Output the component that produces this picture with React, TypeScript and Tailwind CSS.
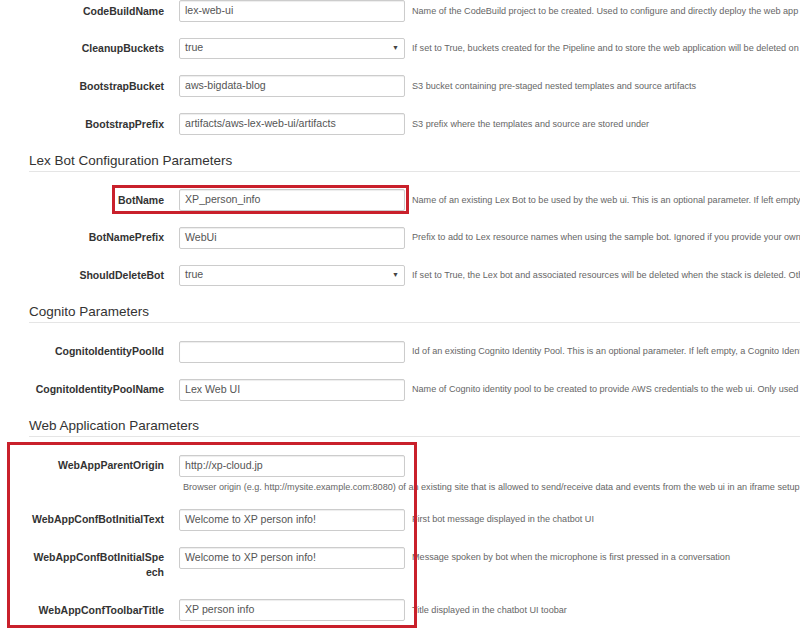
import React from 'react';

type Param = {
    label: string;
    value: string;
    help: string;
    select?: boolean;
    helpBelow?: boolean;
};

const general: Param[] = [
    { label: 'CodeBuildName', value: 'lex-web-ui', help: 'Name of the CodeBuild project to be created. Used to configure and directly deploy the web app to S3' },
    { label: 'CleanupBuckets', value: 'true', select: true, help: 'If set to True, buckets created for the Pipeline and to store the web application will be deleted on CloudFormation delete' },
    { label: 'BootstrapBucket', value: 'aws-bigdata-blog', help: 'S3 bucket containing pre-staged nested templates and source artifacts' },
    { label: 'BootstrapPrefix', value: 'artifacts/aws-lex-web-ui/artifacts', help: 'S3 prefix where the templates and source are stored under' },
];

const lexBot: Param[] = [
    { label: 'BotName', value: 'XP_person_info', help: 'Name of an existing Lex Bot to be used by the web ui. This is an optional parameter. If left empty, a sample bot will be created' },
    { label: 'BotNamePrefix', value: 'WebUi', help: 'Prefix to add to Lex resource names when using the sample bot. Ignored if you provide your own bot' },
    { label: 'ShouldDeleteBot', value: 'true', select: true, help: 'If set to True, the Lex bot and associated resources will be deleted when the stack is deleted. Otherwise, the bot will be preserved' },
];

const cognito: Param[] = [
    { label: 'CognitoIdentityPoolId', value: '', help: 'Id of an existing Cognito Identity Pool. This is an optional parameter. If left empty, a Cognito Identity Pool will be automatically created' },
    { label: 'CognitoIdentityPoolName', value: 'Lex Web UI', help: 'Name of Cognito identity pool to be created to provide AWS credentials to the web ui. Only used if CognitoIdentityPoolId is not specified' },
];

const webApp: Param[] = [
    { label: 'WebAppParentOrigin', value: 'http://xp-cloud.jp', helpBelow: true, help: 'Browser origin (e.g. http://mysite.example.com:8080) of an existing site that is allowed to send/receive data and events from the web ui in an iframe setup.' },
    { label: 'WebAppConfBotInitialText', value: 'Welcome to XP person info!', help: 'First bot message displayed in the chatbot UI' },
    { label: 'WebAppConfBotInitialSpeech', value: 'Welcome to XP person info!', help: 'Message spoken by bot when the microphone is first pressed in a conversation' },
    { label: 'WebAppConfToolbarTitle', value: 'XP person info', help: 'Title displayed in the chatbot UI toobar' },
];

function Row({ p, highlight }: { p: Param; highlight?: boolean }) {
    return (
        <div className="relative flex items-start mb-[15.2px]">
            {/* Label */}
            <div className="ml-[2px] w-[133px] shrink-0 text-right font-bold text-[10.5px] leading-[15px] text-[#333] pt-[3.5px] pb-[4px] break-all">
                {p.label}
            </div>

            <div className="ml-[15px] flex flex-col">
                <div className="flex items-start">
                    {p.select ? (
                        <div className="w-[226px] h-[21px] shrink-0 flex items-center justify-between border border-[#ccc] rounded-[2px] bg-white px-[5px] text-[10.6px] text-[#555]">
                            <span>{p.value}</span>
                            <span className="text-[7px] text-[#444]">▼</span>
                        </div>
                    ) : (
                        <div className="w-[226px] h-[22px] shrink-0 flex items-center border border-[#ccc] rounded-[2px] bg-white px-[5px] text-[10.6px] text-[#555] shadow-[inset_0_1px_1px_rgba(0,0,0,0.075)]">
                            {p.value}
                        </div>
                    )}
                    {!p.helpBelow && (
                        <div className="ml-[7px] pt-[4.5px] whitespace-nowrap text-[9.1px] leading-[13px] text-[#666]">
                            {p.help}
                        </div>
                    )}
                </div>
                {p.helpBelow && (
                    <div className="mt-[4px] ml-[4px] whitespace-nowrap text-[9.1px] leading-[13px] text-[#666]">
                        {p.help}
                    </div>
                )}
            </div>

            {highlight && (
                <div className="absolute left-[83px] -top-[4px] w-[297px] h-[29px] border-[3px] border-[#c9202b]" />
            )}
        </div>
    );
}

function Heading({ children }: { children: React.ReactNode }) {
    // top gap comes from the previous row's bottom margin (collapses)
    return (
        <div className="ml-[29px] mb-[17.5px] h-[21px] border-b border-[#e5e5e5] text-[13.5px] leading-[20px] text-[#333]">
            {children}
        </div>
    );
}

export default function App() {
    return (
        <div className="w-[800px] h-[637px] overflow-hidden bg-white" style={{ fontFamily: '"Liberation Sans", Arial, sans-serif' }}>
            <div className="ml-[29px]">
                {general.map((p) => <Row key={p.label} p={p} />)}
            </div>

            <Heading>Lex Bot Configuration Parameters</Heading>
            <div className="ml-[29px]">
                {lexBot.map((p, i) => <Row key={p.label} p={p} highlight={i === 0} />)}
            </div>

            <Heading>Cognito Parameters</Heading>
            <div className="ml-[29px]">
                {cognito.map((p) => <Row key={p.label} p={p} />)}
            </div>

            <Heading>Web Application Parameters</Heading>
            <div className="relative ml-[29px]">
                {webApp.map((p) => <Row key={p.label} p={p} />)}
                {/* annotation box */}
                <div className="absolute -left-[22px] -top-[13px] w-[410px] h-[186px] border-[3px] border-[#c9202b] pointer-events-none" />
            </div>
        </div>
    );
}
